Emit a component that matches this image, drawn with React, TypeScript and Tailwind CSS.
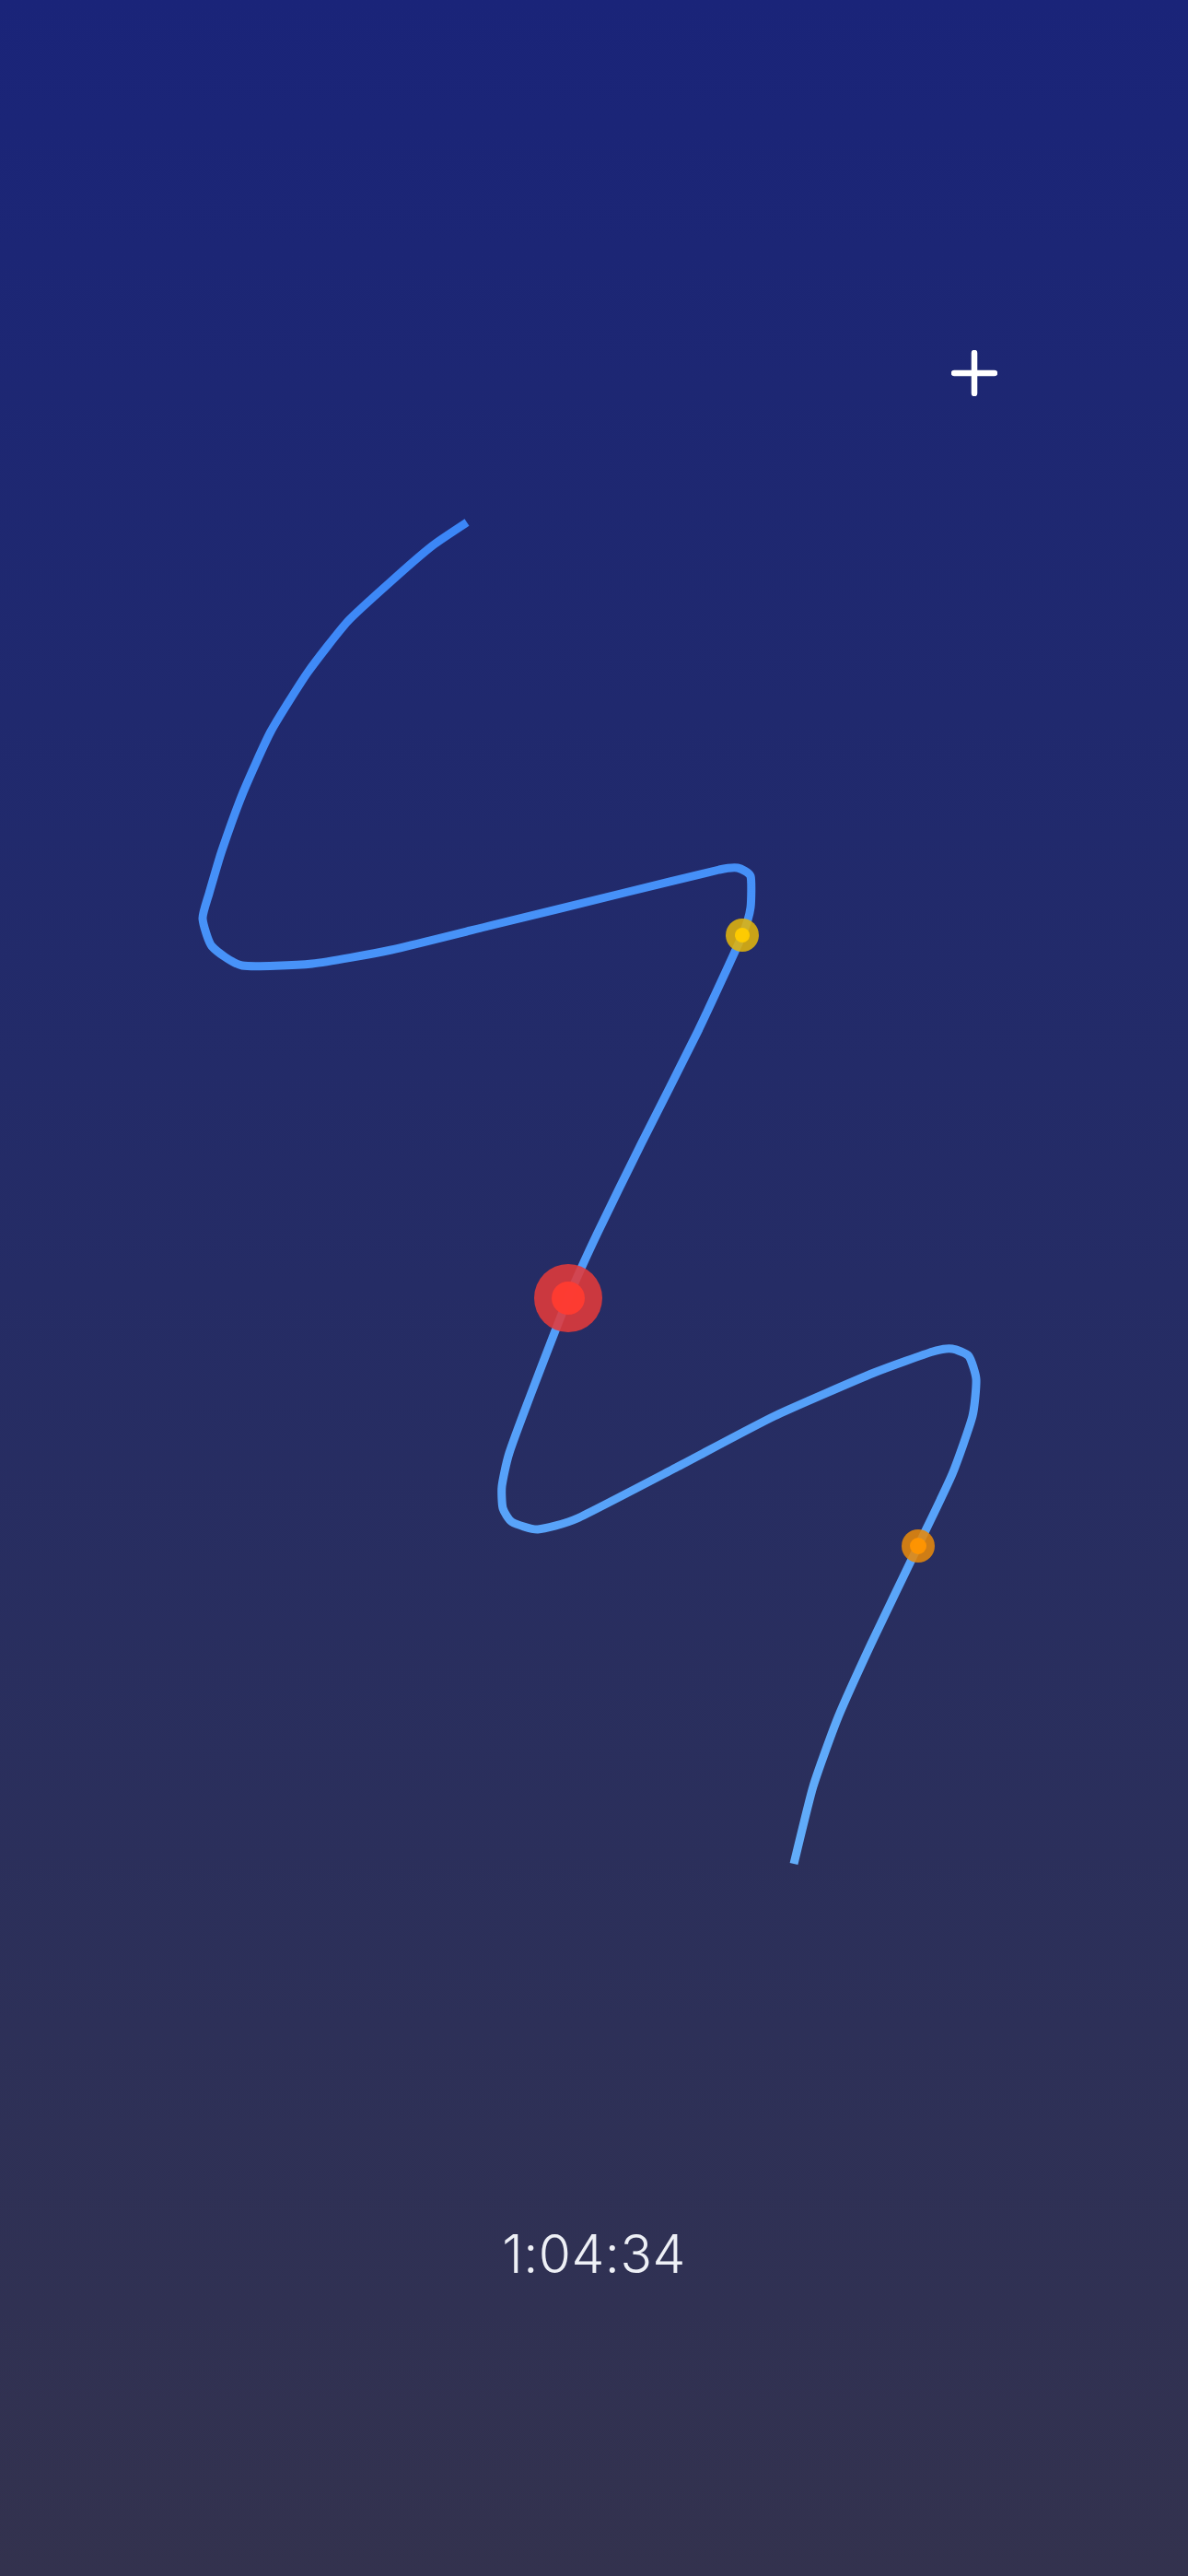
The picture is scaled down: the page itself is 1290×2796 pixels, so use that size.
const path: [number, number][] = [
  [507, 567], [470, 592], [428, 628], [378, 674], [334, 730], [294, 794],
  [264, 860], [241, 923], [227, 970], [220, 997], [230, 1027], [263, 1048],
  [339, 1046], [425, 1031], [535, 1004], [678, 969], [781, 944], [801, 942],
  [815, 951], [815, 985], [806, 1015], [758, 1119], [696, 1242], [648, 1340],
  [617, 1409], [580, 1504], [553, 1577], [545, 1613], [546, 1637], [556, 1652],
  [584, 1660], [627, 1648], [734, 1593], [841, 1537], [949, 1490], [1013, 1467],
  [1034, 1464], [1052, 1472], [1060, 1497], [1056, 1537], [1034, 1600],
  [997, 1678], [946, 1784], [910, 1864], [883, 1939], [862, 2023],
];

// catmull-rom -> cubic bezier, low tension so the turns stay tight
const smooth = (pts: [number, number][], t = 0.28) => {
  let d = `M${pts[0][0]},${pts[0][1]}`;
  for (let i = 0; i < pts.length - 1; i++) {
    const p0 = pts[i - 1] || pts[i];
    const p1 = pts[i];
    const p2 = pts[i + 1];
    const p3 = pts[i + 2] || p2;
    const c1x = p1[0] + ((p2[0] - p0[0]) / 6) * t * 2;
    const c1y = p1[1] + ((p2[1] - p0[1]) / 6) * t * 2;
    const c2x = p2[0] - ((p3[0] - p1[0]) / 6) * t * 2;
    const c2y = p2[1] - ((p3[1] - p1[1]) / 6) * t * 2;
    d += ` C${c1x.toFixed(1)},${c1y.toFixed(1)} ${c2x.toFixed(1)},${c2y.toFixed(1)} ${p2[0]},${p2[1]}`;
  }
  return d;
};

const markers = [
  { x: 806, y: 1015, r: 18, inner: 8, ring: '#e0b40c', core: '#ffcc00' },
  { x: 997, y: 1678, r: 18, inner: 9, ring: '#e6890a', core: '#ff9500' },
  { x: 617, y: 1409, r: 37, inner: 18, ring: '#e23a3a', core: '#ff3b30' },
];

const Track = () => (
  <svg
    className="absolute inset-0 w-full h-full pointer-events-none"
    viewBox="0 0 1290 2796"
    preserveAspectRatio="none"
  >
    <defs>
      <linearGradient id="trackLine" gradientUnits="userSpaceOnUse" x1="0" y1="567" x2="0" y2="2023">
        <stop offset="0" stopColor="#3b86f7" />
        <stop offset="1" stopColor="#62adfa" />
      </linearGradient>
    </defs>
    <path
      d={smooth(path)}
      fill="none"
      stroke="url(#trackLine)"
      strokeWidth={9}
      strokeLinejoin="round"
      strokeLinecap="butt"
    />
    {markers.map(m => (
      <g key={m.x}>
        <circle cx={m.x} cy={m.y} r={m.r} fill={m.ring} opacity={0.88} />
        <circle cx={m.x} cy={m.y} r={m.inner} fill={m.core} opacity={0.95} />
      </g>
    ))}
  </svg>
);

const PlusIcon = () => (
  <svg width="50" height="50" viewBox="0 0 50 50" fill="none" stroke="currentColor" strokeWidth={6.5} strokeLinecap="round">
    <path d="M25 3v44M3 25h44" />
  </svg>
);

const App = () => {
  return (
    <div className="relative w-full h-[2796px] overflow-hidden flex flex-col bg-gradient-to-b from-[#1a2479] via-[#252c65] to-[#33324e]">
      <Track />

      <div className="relative flex justify-end pt-[380px] pr-[207px]">
        <button className="w-[50px] h-[50px] flex items-center justify-center text-white">
          <PlusIcon />
        </button>
      </div>

      <div className="relative mt-auto pb-[321px] flex justify-center">
        <p className="text-[57px] leading-none font-light tracking-[0.5px] text-[#eef0f6] font-['Inter','Noto_Sans',sans-serif]">
          1:04:34
        </p>
      </div>
    </div>
  );
};

export default App;
